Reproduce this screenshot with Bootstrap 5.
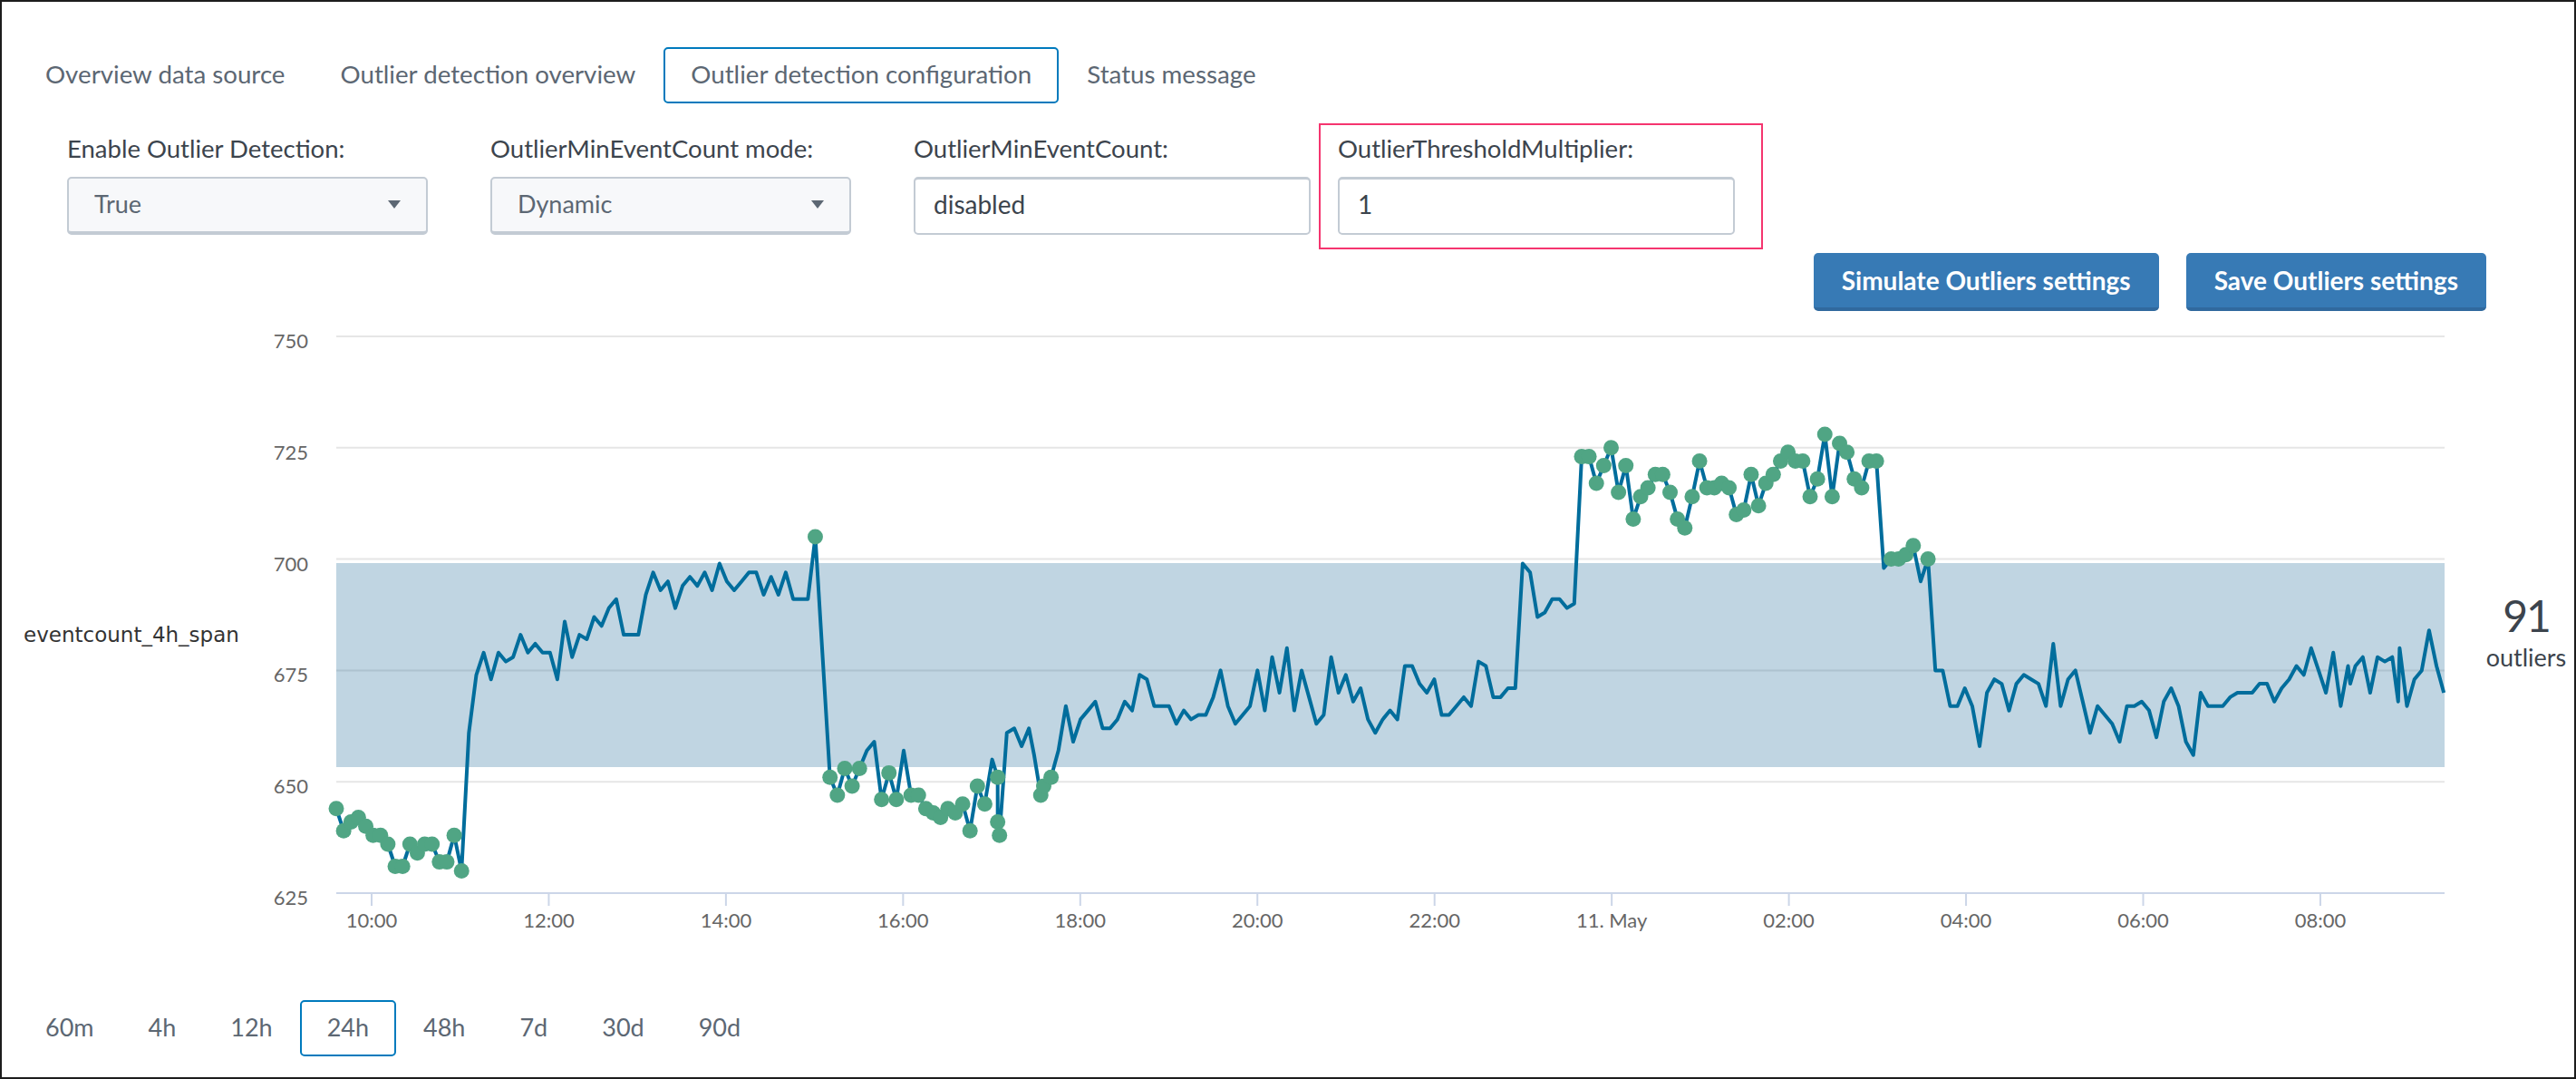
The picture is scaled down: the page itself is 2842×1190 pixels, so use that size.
<!DOCTYPE html>
<html lang="en">
<head>
    <meta charset="UTF-8">
    <meta name="viewport" content="width=device-width, initial-scale=1">
    <title>Outlier detection configuration</title>
    <link href="https://cdn.jsdelivr.net/npm/bootstrap@5.3.0/dist/css/bootstrap.min.css" rel="stylesheet">
    <style>
        html, body {
            height: 100%;
            overflow: hidden;
        }
        body {
            background: #fff;
            font-family: Lato, "Liberation Sans", sans-serif;
            color: #3c444d;
        }
        .frame {
            height: 1190px;
            border: 2px solid #1c1c1c;
        }
        .tab-row {
            padding-left: 18px;
            gap: 1px;
        }
        .tab-item {
            padding: 0 28px;
            height: 62px;
            line-height: 56px;
            font-size: 27.7px;
            color: #5c6773;
            border: 2px solid transparent;
            border-radius: 5px;
            text-decoration: none;
        }
        .tab-item.on {
            border-color: #007abd;
            color: #5c6773;
        }
        .tabs-top {
            margin-top: 50px;
        }
        .filter-row {
            margin-top: 22px;
            padding-left: 72px;
        }
        .filter-item label {
            display: block;
            font-size: 27.5px;
            line-height: 32px;
            margin-bottom: 15px;
            color: #3c444d;
        }
        .filter-select {
            width: 398px;
            margin-right: 69px;
            padding-top: 12px;
        }
        .filter-text {
            width: 438px;
            padding-top: 12px;
        }
        .flag-box {
            border: 2px solid #f5356f;
            margin-left: 9px;
            padding: 10px 29px 16px 19px;
            width: 490px;
            height: 139px;
        }
        .flag-box .filter-text {
            padding-top: 0;
        }
        .pick-btn, .text-box {
            display: flex;
            align-items: center;
            height: 64px;
            width: 100%;
            padding: 0 28px 2px;
            font-size: 27px;
            color: #5c6773;
            border: 2px solid #c3cbd4;
            border-radius: 5px;
        }
        .pick-btn {
            justify-content: space-between;
            background: #f7f8fa;
            border-bottom-width: 4px;
        }
        .text-box {
            padding: 0 20px 5px;
            background: #fff;
            font-size: 28px;
            color: #3c444d;
            border-top-width: 3px;
        }
        .text-box:focus {
            outline: none;
            box-shadow: none;
        }
        .action-row {
            margin-top: 4px;
            padding-right: 97px;
            gap: 30px;
        }
        .action-btn {
            height: 64px;
            padding: 0 31px;
            font-size: 28px;
            font-weight: 700;
            color: #fff;
            background: #377ab5;
            border: 0;
            border-bottom: 4px solid #30699e;
            border-radius: 5px;
        }
        .chart-row {
            margin-top: 6px;
            height: 680px;
        }
        .series-name {
            position: absolute;
            left: 24px;
            top: 334px;
            font-family: "DejaVu Sans", sans-serif;
            font-size: 23px;
            color: #333;
        }
        .count-box {
            position: absolute;
            left: 2718px;
            top: 300px;
            width: 134px;
            text-align: center;
        }
        .count-num {
            font-size: 48px;
            line-height: 60px;
            letter-spacing: -2px;
            color: #3c444d;
        }
        .count-label {
            font-size: 27px;
            line-height: 32px;
            color: #3c444d;
        }
        .range-row {
            margin-top: 74px;
            gap: 0;
        }
        .range-row .tab-item {
            font-size: 27px;
        }
        #chart text {
            font-family: Lato, sans-serif;
            font-size: 22px;
            fill: #666;
        }
    </style>
</head>
<body>
    <div class="frame">
        <nav class="d-flex tab-row tabs-top">
            <a class="tab-item" href="#">Overview data source</a>
            <a class="tab-item" href="#">Outlier detection overview</a>
            <a class="tab-item on" href="#">Outlier detection configuration</a>
            <a class="tab-item" href="#">Status message</a>
        </nav>

        <div class="d-flex align-items-start filter-row">
            <div class="filter-item filter-select">
                <label>Enable Outlier Detection:</label>
                <button type="button" class="pick-btn">True
                    <svg width="14" height="9" viewBox="0 0 14 9"><path d="M0 0H14L7 9Z" fill="#5c6773"/></svg>
                </button>
            </div>
            <div class="filter-item filter-select">
                <label>OutlierMinEventCount mode:</label>
                <button type="button" class="pick-btn">Dynamic
                    <svg width="14" height="9" viewBox="0 0 14 9"><path d="M0 0H14L7 9Z" fill="#5c6773"/></svg>
                </button>
            </div>
            <div class="filter-item filter-text">
                <label>OutlierMinEventCount:</label>
                <input class="text-box" type="text" value="disabled">
            </div>
            <div class="flag-box">
                <div class="filter-item filter-text">
                    <label>OutlierThresholdMultiplier:</label>
                    <input class="text-box" type="text" value="1">
                </div>
            </div>
        </div>

        <div class="d-flex justify-content-end action-row">
            <button type="button" class="action-btn">Simulate Outliers settings</button>
            <button type="button" class="action-btn">Save Outliers settings</button>
        </div>

        <div class="position-relative chart-row">
            <div class="series-name">eventcount_4h_span</div>
            <svg id="chart" width="2838" height="680" viewBox="2 350 2838 680"></svg>
            <div class="count-box">
                <div class="count-num">91</div>
                <div class="count-label">outliers</div>
            </div>
        </div>

        <nav class="d-flex tab-row range-row">
            <a class="tab-item" href="#">60m</a>
            <a class="tab-item" href="#">4h</a>
            <a class="tab-item" href="#">12h</a>
            <a class="tab-item on" href="#">24h</a>
            <a class="tab-item" href="#">48h</a>
            <a class="tab-item" href="#">7d</a>
            <a class="tab-item" href="#">30d</a>
            <a class="tab-item" href="#">90d</a>
        </nav>
    </div>

    <script>
        // event counts, one every 5 minutes
        var counts = [644,639,641,642,640,638,638,636,631,631,636,634,636,636,632,632,638,630,661,674,
            679,673,679,677,678,683,679,681,679,679,673,686,678,683,682,687,685,689,691,683,
            683,683,692,697,693,695,689,694,696,694,697,693,699,695,693,695,697,697,692,696,
            692,697,691,691,691,705,678,651,647,653,649,653,657,659,646,652,646,657,647,647,
            644,643,642,644,643,645,639,649,645,655,638,661,662,658,662,656,649,651,657,667,
            659,664,666,668,662,662,664,668,666,674,673,667,667,667,663,666,664,665,665,669,
            675,667,663,665,667,675,666,678,670,680,666,675,669,663,665,678,670,674,668,671,
            664,661,664,666,664,676,676,672,670,673,665,665,667,669,667,677,676,669,669,671,
            671,699,697,687,688,691,691,689,690,723,723,717,721,725,715,721,709,714,716,719,
            719,715,709,707,714,722,716,716,717,716,710,711,719,712,717,719,722,724,722,722,
            714,718,728,714,726,724,718,716,722,722,698,700,700,701,703,695,700,675,675,667,
            667,671,667,658,670,673,672,666,672,674,673,672,667,681,667,673,675,668,661,667,
            665,663,659,667,667,668,666,660,668,671,667,659,656,670,667,667,667,669,670,670,
            670,672,672,668,671,673,676,674,680,675,670,679,667,676,676,678,670,678,677,678,
            680,667,673,675,684,676,670];

        var series = counts.map(function (v, i) { return [i, v]; });
        function insertBefore(i, extra) {
            var at = series.findIndex(function (p) { return p[0] === i; });
            series.splice.apply(series, [at, 0].concat(extra));
        }
        insertBefore(280, [[279.8, 668]]);
        insertBefore(274, [[273.3, 672]]);
        series = series.filter(function (p) { return p[0] !== 95; });
        insertBefore(96, [[94.7, 656], [95.6, 647]]);
        insertBefore(90, [[89.75, 651], [89.75, 641]]);

        var svg = document.getElementById("chart");
        var NS = "http://www.w3.org/2000/svg";
        var left = 371, right = 2697;
        function xOf(i) { return left + i * 8.13; }
        function yOf(v) { return 372 + (750 - v) * 4.912; }

        function add(tag, attrs, text) {
            var el = document.createElementNS(NS, tag);
            for (var k in attrs) el.setAttribute(k, attrs[k]);
            if (text) el.textContent = text;
            svg.appendChild(el);
            return el;
        }

        [750, 725, 700, 675, 650].forEach(function (v) {
            add("line", { x1: left, x2: right, y1: yOf(v), y2: yOf(v), stroke: "#e6e6e6", "stroke-width": 2 });
        });
        [750, 725, 700, 675, 650, 625].forEach(function (v) {
            add("text", { x: 340, y: yOf(v) + 13, "text-anchor": "end" }, String(v));
        });

        // threshold band
        add("rect", { x: left, y: 622, width: right - left, height: 225, fill: "#0a5c8f", "fill-opacity": 0.26 });

        // x axis
        add("line", { x1: left, x2: right, y1: 986, y2: 986, stroke: "#ccd6e8", "stroke-width": 2 });
        var ticks = ["10:00", "12:00", "14:00", "16:00", "18:00", "20:00", "22:00", "11. May", "02:00", "04:00", "06:00", "08:00"];
        ticks.forEach(function (t, n) {
            var x = 410 + n * 195.45;
            add("line", { x1: x, x2: x, y1: 986, y2: 1000, stroke: "#ccd6e8", "stroke-width": 2 });
            add("text", { x: x, y: 1024, "text-anchor": "middle" }, t);
        });

        var pts = series.map(function (p) { return xOf(p[0]).toFixed(1) + "," + yOf(p[1]).toFixed(1); });
        add("polyline", { points: pts.join(" "), fill: "none", stroke: "#006d9c", "stroke-width": 4, "stroke-linejoin": "round" });

        // a dot on everything outside the band
        series.forEach(function (p) {
            if (p[1] < 653.4 || p[1] >= 700) {
                add("circle", { cx: xOf(p[0]), cy: yOf(p[1]), r: 8.5, fill: "#50a584" });
            }
        });
    </script>
    <script src="https://cdn.jsdelivr.net/npm/bootstrap@5.3.0/dist/js/bootstrap.bundle.min.js"></script>
</body>
</html>
